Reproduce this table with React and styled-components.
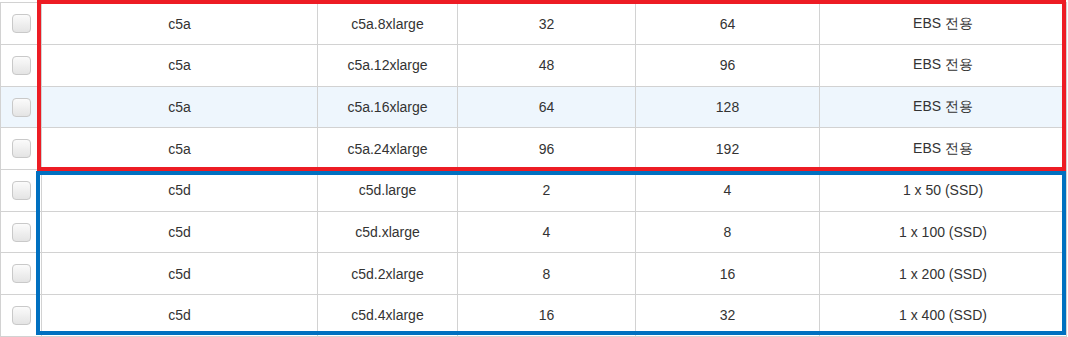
import React from 'react';
import styled, { createGlobalStyle } from 'styled-components';

const GlobalStyle = createGlobalStyle`
	html, body {
		margin: 0;
		padding: 0;
		background: #ffffff;
		overflow: hidden;
	}
`;

const Wrapper = styled.div`
	position: relative;
	width: 1068px;
	height: 337px;
	overflow: hidden;
	font-family: "Liberation Sans", Arial, sans-serif;
`;

const Table = styled.table`
	width: 1067px;
	margin-top: 2.3px;
	border-collapse: collapse;
	table-layout: fixed;
	font-size: 14px;
	color: #333333;
`;

const Row = styled.tr`
	background: ${(p) => (p.$active ? '#eef6fd' : '#ffffff')};
`;

const Cell = styled.td`
	height: 40.7px;
	padding: 0;
	border: 1px solid #d2d2d2;
	text-align: center;
	vertical-align: middle;
	white-space: nowrap;
`;

const Checkbox = styled.span`
	display: inline-block;
	width: 17px;
	height: 17px;
	border: 1px solid #c9c9c9;
	border-radius: 4px;
	background: linear-gradient(#fbfbfb, #e4e4e4);
	vertical-align: middle;
`;

const Highlight = styled.div`
	position: absolute;
	box-sizing: border-box;
	left: ${(p) => p.$left}px;
	top: ${(p) => p.$top}px;
	width: ${(p) => p.$width}px;
	height: ${(p) => p.$height}px;
	border: 4px solid ${(p) => p.$color};
	pointer-events: none;
`;

const widths = [41, 276, 140, 178, 184, 247];

const rows = [
	['c5a', 'c5a.8xlarge', '32', '64', 'EBS 전용'],
	['c5a', 'c5a.12xlarge', '48', '96', 'EBS 전용'],
	['c5a', 'c5a.16xlarge', '64', '128', 'EBS 전용', true],
	['c5a', 'c5a.24xlarge', '96', '192', 'EBS 전용'],
	['c5d', 'c5d.large', '2', '4', '1 x 50 (SSD)'],
	['c5d', 'c5d.xlarge', '4', '8', '1 x 100 (SSD)'],
	['c5d', 'c5d.2xlarge', '8', '16', '1 x 200 (SSD)'],
	['c5d', 'c5d.4xlarge', '16', '32', '1 x 400 (SSD)'],
];

const App = () => {
	return (
		<Wrapper>
			<GlobalStyle />
			<Table>
				<colgroup>
					{widths.map((w, i) => (
						<col key={i} style={{ width: w }} />
					))}
				</colgroup>
				<tbody>
					{rows.map((r, i) => (
						<Row key={i} $active={r[5]}>
							<Cell>
								<Checkbox />
							</Cell>
							{r.slice(0, 5).map((c, j) => (
								<Cell key={j}>{c}</Cell>
							))}
						</Row>
					))}
				</tbody>
			</Table>
			<Highlight $color="#ed1c24" $left={37} $top={0} $width={1029} $height={171} />
			<Highlight $color="#0070c0" $left={36} $top={171} $width={1030} $height={164} />
		</Wrapper>
	);
};

export default App;
